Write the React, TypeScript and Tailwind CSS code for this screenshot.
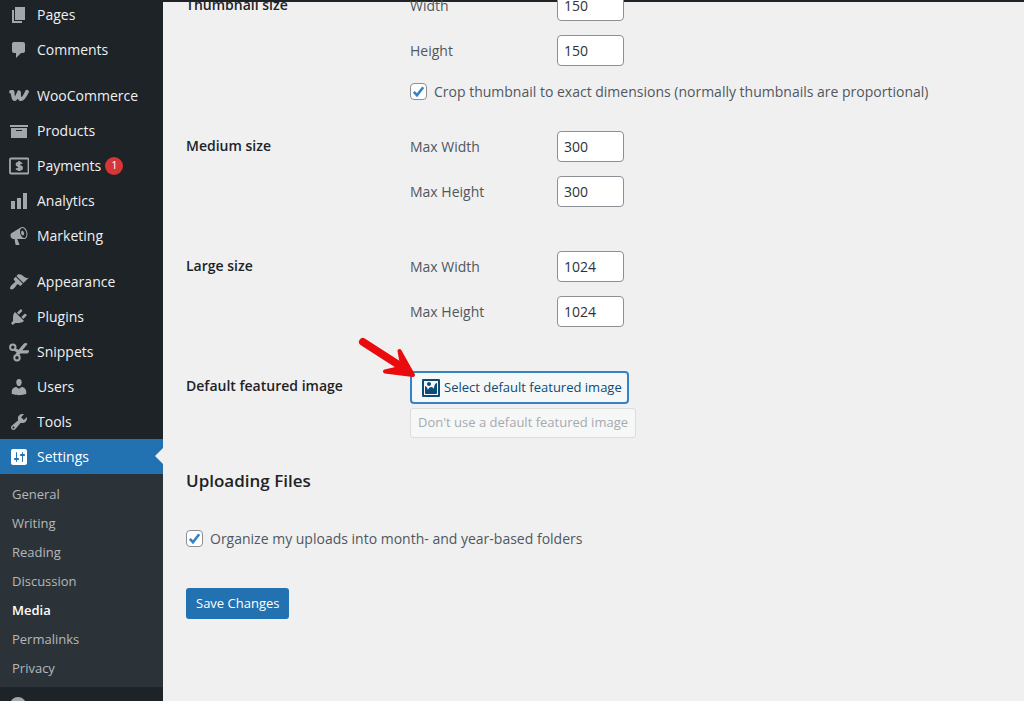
import React, { useState } from 'react';

type IconName =
  | 'pages'
  | 'comments'
  | 'woo'
  | 'products'
  | 'payments'
  | 'analytics'
  | 'marketing'
  | 'appearance'
  | 'plugins'
  | 'snippets'
  | 'users'
  | 'tools'
  | 'settings'
  | 'image';

const ICONS: Record<IconName, React.ReactNode> = {
  pages: <path d="M6 15V2h10v13H6zm-1 1h8v2H3V5h2v11z" />,
  comments: <path d="M5 2h9c1.1 0 2 .9 2 2v7c0 1.1-.9 2-2 2h-2l-5 5v-5H5c-1.1 0-2-.9-2-2V4c0-1.1.9-2 2-2z" />,
  woo: (
    <path
      d="M2 5.800H3.600C3.800 9 4 13.200 5.400 13.200C6.900 13.200 8.600 9.600 10 6.200C9.900 9.600 10.400 13.200 12 13.200C14 13.200 16.200 9.600 18 5.800"
      fill="none"
      stroke="currentColor"
      strokeWidth="3.800"
      strokeLinecap="round"
      strokeLinejoin="round"
    />
  ),
  products: <path d="M19 4v2H1V4h18zM2 7h16v10H2V7zm11 3V9H7v1h6z" />,
  payments: (
    <g fill="none" stroke="currentColor" strokeLinejoin="round">
      <rect x="1" y="2.500" width="18.500" height="15" rx="1" strokeWidth="1.800" />
      <path
        d="M12.900 7.800c-.5-.8-1.500-1.100-2.700-1.100-1.500 0-2.600.6-2.600 1.600 0 2.500 5.300 1.200 5.300 3.600 0 1.100-1.200 1.600-2.700 1.600-1.300 0-2.400-.4-3-1.200M10.200 5v10"
        strokeWidth="2.100"
      />
    </g>
  ),
  analytics: <path d="M18 18V2h-4v16h4zm-6 0V7H8v11h4zm-6 0v-8H2v8h4z" />,
  marketing: (
    <path d="M18.15 5.94c.46 1.62.38 3.22-.02 4.48-.42 1.28-1.26 2.18-2.3 2.48-.16.06-.26.06-.4.06-.06.02-.12.02-.18.02-.06.02-.14.02-.22.02h-6.8l2.22 5.5c.02.14-.06.26-.14.34-.08.1-.24.16-.34.16H6.95c-.1 0-.26-.06-.34-.16-.08-.08-.16-.2-.14-.34l-1-5.5H4.25l-.02-.02c-.5.06-1.08-.18-1.54-.62s-.88-1.08-1.06-1.88c-.24-.8-.2-1.56-.02-2.2.18-.62.58-1.08 1.06-1.3l.02-.02 9-5.4c.1-.06.18-.1.24-.16.06-.04.14-.08.24-.12.16-.08.28-.12.5-.18 1.04-.3 2.24.1 3.22.98s1.84 2.24 2.26 3.86zm-2.58 5.98h-.02c.4-.1.74-.34 1.04-.7.58-.7.86-1.76.86-3.04 0-.64-.1-1.3-.28-1.98-.34-1.36-1.02-2.5-1.78-3.24s-1.68-1.1-2.46-.88c-.82.22-1.4.96-1.7 2-.32 1.04-.28 2.36.06 3.72.38 1.36 1 2.5 1.8 3.24.78.74 1.62 1.1 2.48.88zm-2.54-7.08c.22-.04.42-.02.62.04.38.16.76.48 1.02 1s.42 1.2.42 1.78c0 .3-.04.56-.12.8-.18.48-.44.84-.86.94-.34.1-.8-.06-1.14-.4s-.64-.86-.78-1.5c-.18-.62-.12-1.24.02-1.72s.48-.84.82-.94z" />
  ),
  appearance: (
    <path d="M14.48 11.06L7.41 3.99l1.5-1.5c.5-.56 2.3-.47 3.51.32 1.21.8 1.43 1.28 2.91 2.1 1.18.64 2.45 1.26 4.45.85zm-.71.71L6.7 4.7 4.93 6.47c-.39.39-.39 1.02 0 1.41l1.06 1.06c.39.39.39 1.03 0 1.42-.6.6-1.43 1.11-2.21 1.69-.35.26-.7.53-1.01.84C1.43 14.23.4 16.08 1.4 17.07c.99 1 2.84-.03 4.18-1.36.31-.31.58-.66.85-1.02.57-.78 1.08-1.61 1.69-2.21.39-.39 1.02-.39 1.41 0l1.06 1.06c.39.39 1.02.39 1.41 0z" />
  ),
  plugins: (
    <path d="M13.11 4.36L9.87 7.6 8 5.73l3.24-3.24c.35-.34 1.05-.2 1.56.32.52.51.66 1.21.31 1.55zm-8 1.77l.91-1.12 9.01 9.01-1.19.84c-.71.71-2.63 1.16-3.82 1.16H6.14L4.9 17.26c-.59.59-1.54.59-2.12 0-.59-.58-.59-1.53 0-2.12l1.24-1.24v-3.88c0-1.13.4-3.19 1.09-3.89zm7.26 3.97l3.24-3.24c.34-.35 1.04-.21 1.55.31.52.51.66 1.21.31 1.55l-3.24 3.25z" />
  ),
  snippets: (
    <g>
      <circle cx="3.800" cy="5.300" r="2.700" fill="none" stroke="currentColor" strokeWidth="2" />
      <circle cx="8" cy="15.800" r="2.700" fill="none" stroke="currentColor" strokeWidth="2" />
      <path d="M6.500 12L9 8.500 14.700 1.800c1.200-1.300 3.200-1 3.900.2L13.300 8.200H20c.3 2-1 3.400-2.700 3.400H11.500L9.800 13.600zM5.600 6L9.500 7.800 9 11.500 4.600 8.200z" />
    </g>
  ),
  users: (
    <path d="M10 9.25c-2.27 0-2.73-3.44-2.73-3.44C7 4.02 7.82 2 9.97 2c2.16 0 2.98 2.02 2.71 3.81 0 0-.41 3.44-2.68 3.44zm0 2.57L12.72 10c2.39 0 4.52 2.33 4.52 4.53v2.49s-3.65 1.13-7.24 1.13c-3.65 0-7.24-1.13-7.24-1.13v-2.49c0-2.25 1.94-4.48 4.47-4.48z" />
  ),
  tools: (
    <path d="M16.68 9.77c-1.34 1.34-3.3 1.67-4.95.99l-5.41 6.52c-.99.99-2.59.99-3.58 0s-.99-2.59 0-3.57l6.52-5.42c-.68-1.65-.35-3.61.99-4.95 1.28-1.28 3.12-1.62 4.72-1.06l-2.89 2.89 2.82 2.82 2.86-2.87c.53 1.58.18 3.39-1.08 4.65zM3.81 16.21c.4.39 1.04.39 1.43 0 .4-.4.4-1.04 0-1.43-.39-.4-1.03-.4-1.43 0-.39.39-.39 1.03 0 1.43z" />
  ),
  settings: (
    <path d="M18 16V4c0-1.1-.9-2-2-2H4c-1.1 0-2 .9-2 2v12c0 1.1.9 2 2 2h12c1.1 0 2-.9 2-2zM8 11h1c.55 0 1 .45 1 1s-.45 1-1 1H8v1.5c0 .28-.22.5-.5.5s-.5-.22-.5-.5V13H6c-.55 0-1-.45-1-1s.45-1 1-1h1V5.5c0-.28.22-.5.5-.5s.5.22.5.5V11zm5-2h-1c-.55 0-1-.45-1-1s.45-1 1-1h1V5.5c0-.28.22-.5.5-.5s.5.22.5.5V7h1c.55 0 1 .45 1 1s-.45 1-1 1h-1v5.5c0 .28-.22.5-.5.5s-.5-.22-.5-.5V9z" />
  ),
  image: (
    <path d="M2.25 1h15.5c.69 0 1.25.56 1.25 1.25v15.5c0 .69-.56 1.25-1.25 1.25H2.25C1.56 19 1 18.44 1 17.75V2.25C1 1.56 1.56 1 2.25 1zM17 17V3H3v14h14zM10 6c0-1.1-.9-2-2-2s-2 .9-2 2 .9 2 2 2 2-.9 2-2zm3 5s0-6 3-6v10c0 .55-.45 1-1 1H5c-.55 0-1-.45-1-1V8c2 0 3 4 3 4s1-3 3-3 3 2 3 2z" />
  ),
};

function Icon({ name }: { name: IconName }) {
  return (
    <svg viewBox="0 0 20 20" fill="currentColor" aria-hidden="true" className="w-5 h-5 shrink-0">
      {ICONS[name]}
    </svg>
  );
}

type MenuItem = { label: string; icon: IconName; badge?: number };

const MENU_GROUPS: MenuItem[][] = [
  [
    { label: 'Pages', icon: 'pages' },
    { label: 'Comments', icon: 'comments' },
  ],
  [
    { label: 'WooCommerce', icon: 'woo' },
    { label: 'Products', icon: 'products' },
    { label: 'Payments', icon: 'payments', badge: 1 },
    { label: 'Analytics', icon: 'analytics' },
    { label: 'Marketing', icon: 'marketing' },
  ],
  [
    { label: 'Appearance', icon: 'appearance' },
    { label: 'Plugins', icon: 'plugins' },
    { label: 'Snippets', icon: 'snippets' },
    { label: 'Users', icon: 'users' },
    { label: 'Tools', icon: 'tools' },
    { label: 'Settings', icon: 'settings' },
  ],
];

const SUBMENU = ['General', 'Writing', 'Reading', 'Discussion', 'Media', 'Permalinks', 'Privacy'];

function Sidebar() {
  return (
    <nav className="w-[163px] shrink-0 overflow-hidden bg-[#1d2327]">
      {/* menu is scrolled a few pixels */}
      <div className="-mt-[3px] flex flex-col gap-[11px]">
        {MENU_GROUPS.map((group) => (
          <ul key={group[0].label}>
            {group.map((item) => {
              const active = item.label === 'Settings';
              return (
                <li key={item.label} className="relative">
                  <a
                    href="#"
                    className={`flex h-[35px] items-center gap-2 pl-[9px] text-[14px] ${
                      active ? 'bg-[#2271b1] text-white' : 'text-[#f0f0f1]'
                    }`}
                  >
                    <span className={active ? 'text-white' : 'text-[#a2a7ac]'}>
                      <Icon name={item.icon} />
                    </span>
                    {item.label}
                    {item.badge && (
                      <span className="-ml-1 flex h-[18px] w-[18px] items-center justify-center rounded-full bg-[#d63638] text-[11px] text-white">
                        {item.badge}
                      </span>
                    )}
                  </a>
                  {active && (
                    <span className="absolute right-0 top-[9px] border-y-8 border-r-8 border-y-transparent border-r-[#f0f0f1]" />
                  )}
                </li>
              );
            })}
          </ul>
        ))}
      </div>
      <ul className="bg-[#2c3338] pt-[6px] pb-1 text-[13px]">
        {SUBMENU.map((label) => (
          <li key={label}>
            <a
              href="#"
              className={`flex h-[29px] items-center pl-3 ${
                label === 'Media' ? 'font-semibold text-white' : 'text-[#b5b8bb]'
              }`}
            >
              {label}
            </a>
          </li>
        ))}
      </ul>
      <button type="button" aria-label="Collapse menu" className="ml-[10px] mt-[10px] h-4 w-4 rounded-full bg-[#a2a7ac]" />
    </nav>
  );
}

function Row({ title, children }: { title: string; children: React.ReactNode }) {
  return (
    <div className="flex">
      <h3 className="w-[224px] shrink-0 pt-1 text-[14px] leading-[22px] font-semibold text-[#1d2327]">{title}</h3>
      <div className="flex flex-col items-start">{children}</div>
    </div>
  );
}

function SizeField({ id, label, value }: { id: string; label: string; value: string }) {
  const [size, setSize] = useState(value);
  return (
    <div className="flex h-[31px] items-center">
      <label htmlFor={id} className="w-[147px]">
        {label}
      </label>
      <input
        id={id}
        type="text"
        value={size}
        onChange={(e) => setSize(e.target.value)}
        className="h-[31px] w-[67px] rounded border border-[#8c8f94] bg-white px-[6px] text-[14px] text-[#2c3338]"
      />
    </div>
  );
}

function Checkbox({ id, label }: { id: string; label: string }) {
  const [checked, setChecked] = useState(true);
  return (
    <div className="flex h-[22px] items-center gap-[7px]">
      <span className="relative h-[17px] w-[17px]">
        <input
          id={id}
          type="checkbox"
          checked={checked}
          onChange={(e) => setChecked(e.target.checked)}
          className="block h-[17px] w-[17px] appearance-none rounded border border-[#8c8f94] bg-white"
        />
        {checked && (
          <svg viewBox="0 0 17 17" className="pointer-events-none absolute inset-0 h-[17px] w-[17px]">
            <path d="M3.800 8.800l3.200 3.400L13.200 4.200" fill="none" stroke="#3582c4" strokeWidth="2.600" />
          </svg>
        )}
      </span>
      <label htmlFor={id}>{label}</label>
    </div>
  );
}

function Arrow() {
  return (
    <svg viewBox="0 0 60 44" className="pointer-events-none absolute -left-[53px] -top-[36px] h-11 w-[60px]" aria-hidden="true">
      <path d="M6 7L48 34" stroke="#ea0b0e" strokeWidth="8" strokeLinecap="round" />
      <path
        d="M56 40L42.500 16L45 30L43 33L28 36.500Z"
        fill="#ea0b0e"
        stroke="#ea0b0e"
        strokeWidth="4"
        strokeLinejoin="round"
      />
    </svg>
  );
}

export default function App() {
  return (
    <div
      className="flex h-screen overflow-hidden bg-[#f0f0f1] text-[14px] text-[#50575e]"
      style={{ fontFamily: '"Segoe UI", "Open Sans", "Noto Sans", sans-serif' }}
    >
      <Sidebar />
      <main className="flex-1 overflow-hidden">
        <div className="h-[2px] bg-[#1d2327]" />
        <form className="-mt-3 flex flex-col pl-[23px]" onSubmit={(e) => e.preventDefault()}>
          <div className="flex flex-col gap-11">
            <Row title="Thumbnail size">
              <div className="-mb-[15px] flex flex-col gap-[14px]">
                <SizeField id="thumb-w" label="Width" value="150" />
                <SizeField id="thumb-h" label="Height" value="150" />
                <Checkbox id="crop" label="Crop thumbnail to exact dimensions (normally thumbnails are proportional)" />
              </div>
            </Row>
            <Row title="Medium size">
              <div className="flex flex-col gap-[14px]">
                <SizeField id="medium-w" label="Max Width" value="300" />
                <SizeField id="medium-h" label="Max Height" value="300" />
              </div>
            </Row>
            <Row title="Large size">
              <div className="flex flex-col gap-[14px]">
                <SizeField id="large-w" label="Max Width" value="1024" />
                <SizeField id="large-h" label="Max Height" value="1024" />
              </div>
            </Row>
            <Row title="Default featured image">
              <div className="relative flex flex-col items-start gap-1">
                <button
                  type="button"
                  className="flex h-[33px] w-[219px] items-center gap-[3px] rounded border-2 border-[#3582c4] bg-[#f6f7f7] pl-[9px] text-[13px] whitespace-nowrap text-[#0a4b78]"
                >
                  <Icon name="image" />
                  Select default featured image
                </button>
                <button
                  type="button"
                  disabled
                  className="h-[30px] w-[226px] rounded-[3px] border border-[#dcdcde] bg-[#f6f7f7] text-[13px] whitespace-nowrap text-[#a7aaad]"
                >
                  Don't use a default featured image
                </button>
                <Arrow />
              </div>
            </Row>
          </div>
          <h2 className="mt-[30px] text-[17px] leading-[26px] font-semibold text-[#1d2327]">Uploading Files</h2>
          <div className="mt-[33px]">
            <Checkbox id="organize" label="Organize my uploads into month- and year-based folders" />
          </div>
          <button
            type="submit"
            className="mt-[39px] h-[31px] self-start rounded-[3px] bg-[#2271b1] px-[10px] text-[13px] text-white"
          >
            Save Changes
          </button>
        </form>
      </main>
    </div>
  );
}
